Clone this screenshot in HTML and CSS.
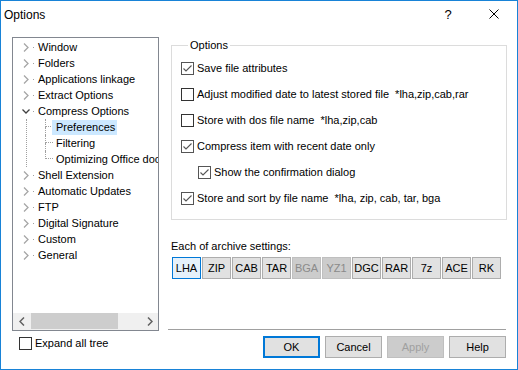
FILE: index.html
```html
<!DOCTYPE html>
<html>
<head>
<meta charset="utf-8">
<link rel="stylesheet" href="styles.css">
</head>
<body>
<div class="window">
  <div class="titlebar">
    <span class="title">Options</span>
    <span class="tb-btn help">?</span>
    <span class="tb-btn close"><svg width="10" height="10" viewBox="0 0 10 10"><path d="M0.5 0.5 L9.5 9.5 M9.5 0.5 L0.5 9.5" stroke="#000" stroke-width="1" fill="none"/></svg></span>
  </div>
  <div class="body">
    <div class="left">
      <div class="tree">
        <div class="tree-items">
          <div class="node"><svg class="chev" width="8" height="9" viewBox="0 0 8 9"><path d="M2 0.5 L6 4.5 L2 8.5" stroke="#a6a6a6" stroke-width="1.3" fill="none"/></svg><i class="stub"></i><span class="label">Window</span></div>
          <div class="node"><svg class="chev" width="8" height="9" viewBox="0 0 8 9"><path d="M2 0.5 L6 4.5 L2 8.5" stroke="#a6a6a6" stroke-width="1.3" fill="none"/></svg><i class="stub"></i><span class="label">Folders</span></div>
          <div class="node"><svg class="chev" width="8" height="9" viewBox="0 0 8 9"><path d="M2 0.5 L6 4.5 L2 8.5" stroke="#a6a6a6" stroke-width="1.3" fill="none"/></svg><i class="stub"></i><span class="label">Applications linkage</span></div>
          <div class="node"><svg class="chev" width="8" height="9" viewBox="0 0 8 9"><path d="M2 0.5 L6 4.5 L2 8.5" stroke="#a6a6a6" stroke-width="1.3" fill="none"/></svg><i class="stub"></i><span class="label">Extract Options</span></div>
          <div class="node"><svg class="chev" width="8" height="9" viewBox="0 0 8 9"><path d="M0.5 2.5 L4 6 L7.5 2.5" stroke="#404040" stroke-width="1.3" fill="none"/></svg><i class="stub"></i><span class="label">Compress Options</span></div>
          <div class="children">
            <div class="child"><span class="branch"><i class="up"></i><i class="down"></i></span><span class="label selected">Preferences</span></div>
            <div class="child"><span class="branch"><i class="up"></i><i class="down"></i></span><span class="label">Filtering</span></div>
            <div class="child"><span class="branch"><i class="up"></i></span><span class="label">Optimizing Office doc</span></div>
          </div>
          <div class="node"><svg class="chev" width="8" height="9" viewBox="0 0 8 9"><path d="M2 0.5 L6 4.5 L2 8.5" stroke="#a6a6a6" stroke-width="1.3" fill="none"/></svg><i class="stub"></i><span class="label">Shell Extension</span></div>
          <div class="node"><svg class="chev" width="8" height="9" viewBox="0 0 8 9"><path d="M2 0.5 L6 4.5 L2 8.5" stroke="#a6a6a6" stroke-width="1.3" fill="none"/></svg><i class="stub"></i><span class="label">Automatic Updates</span></div>
          <div class="node"><svg class="chev" width="8" height="9" viewBox="0 0 8 9"><path d="M2 0.5 L6 4.5 L2 8.5" stroke="#a6a6a6" stroke-width="1.3" fill="none"/></svg><i class="stub"></i><span class="label">FTP</span></div>
          <div class="node"><svg class="chev" width="8" height="9" viewBox="0 0 8 9"><path d="M2 0.5 L6 4.5 L2 8.5" stroke="#a6a6a6" stroke-width="1.3" fill="none"/></svg><i class="stub"></i><span class="label">Digital Signature</span></div>
          <div class="node"><svg class="chev" width="8" height="9" viewBox="0 0 8 9"><path d="M2 0.5 L6 4.5 L2 8.5" stroke="#a6a6a6" stroke-width="1.3" fill="none"/></svg><i class="stub"></i><span class="label">Custom</span></div>
          <div class="node"><svg class="chev" width="8" height="9" viewBox="0 0 8 9"><path d="M2 0.5 L6 4.5 L2 8.5" stroke="#a6a6a6" stroke-width="1.3" fill="none"/></svg><i class="stub"></i><span class="label">General</span></div>
        </div>
        <div class="hscroll">
          <span class="sb-arrow"><svg width="6" height="9" viewBox="0 0 6 9"><path d="M5 0.5 L1 4.5 L5 8.5" stroke="#606060" stroke-width="1.5" fill="none"/></svg></span>
          <span class="sb-track"><span class="sb-thumb"></span></span>
          <span class="sb-arrow"><svg width="6" height="9" viewBox="0 0 6 9"><path d="M1 0.5 L5 4.5 L1 8.5" stroke="#606060" stroke-width="1.5" fill="none"/></svg></span>
        </div>
      </div>
      <div class="check expand"><span class="box"></span><span>Expand all tree</span></div>
    </div>
    <div class="right">
      <fieldset class="group">
        <legend>Options</legend>
        <div class="check row"><span class="box on"><svg width="11" height="11" viewBox="0 0 11 11"><path d="M1.5 5.5 L4 8 L9.5 2.5" stroke="#555" stroke-width="1.1" fill="none"/></svg></span><span>Save file attributes</span></div>
        <div class="check row"><span class="box"></span><span>Adjust modified date to latest stored file &nbsp;*lha,zip,cab,rar</span></div>
        <div class="check row"><span class="box"></span><span>Store with dos file name &nbsp;*lha,zip,cab</span></div>
        <div class="check row"><span class="box on"><svg width="11" height="11" viewBox="0 0 11 11"><path d="M1.5 5.5 L4 8 L9.5 2.5" stroke="#555" stroke-width="1.1" fill="none"/></svg></span><span>Compress item with recent date only</span></div>
        <div class="check row indent"><span class="box on"><svg width="11" height="11" viewBox="0 0 11 11"><path d="M1.5 5.5 L4 8 L9.5 2.5" stroke="#555" stroke-width="1.1" fill="none"/></svg></span><span>Show the confirmation dialog</span></div>
        <div class="check row"><span class="box on"><svg width="11" height="11" viewBox="0 0 11 11"><path d="M1.5 5.5 L4 8 L9.5 2.5" stroke="#555" stroke-width="1.1" fill="none"/></svg></span><span>Store and sort by file name &nbsp;*lha, zip, cab, tar, bga</span></div>
      </fieldset>
      <div class="archive-label">Each of archive settings:</div>
      <div class="archive-buttons">
        <span class="abtn focus">LHA</span>
        <span class="abtn">ZIP</span>
        <span class="abtn">CAB</span>
        <span class="abtn">TAR</span>
        <span class="abtn disabled">BGA</span>
        <span class="abtn disabled">YZ1</span>
        <span class="abtn">DGC</span>
        <span class="abtn">RAR</span>
        <span class="abtn">7z</span>
        <span class="abtn">ACE</span>
        <span class="abtn">RK</span>
      </div>
      <div class="spacer"></div>
      <div class="sep"></div>
      <div class="buttons">
        <span class="btn default">OK</span>
        <span class="btn">Cancel</span>
        <span class="btn disabled">Apply</span>
        <span class="btn">Help</span>
      </div>
    </div>
  </div>
</div>
</body>
</html>
```
FILE: styles.css
```css
* { box-sizing: border-box; }
html, body { margin: 0; padding: 0; background: #fff; }
body { font-family: "Liberation Sans", Arial, sans-serif; font-size: 11px; color: #000; }

.window {
  width: 518px; height: 370px;
  border: 1px solid #1883d7;
  background: #fff;
  display: flex; flex-direction: column;
}
.titlebar {
  height: 30px; display: flex; align-items: center;
  font-size: 12px;
}
.title { flex: 1; padding-left: 3px; padding-bottom: 3px; }
.tb-btn { width: 46px; height: 30px; display: flex; align-items: center; justify-content: center; padding-bottom: 4px; }
.help { font-size: 13px; }

.body { flex: 1; display: flex; padding: 6px 10px 0 11px; gap: 9px; }

.left { width: 147px; display: flex; flex-direction: column; }
.tree {
  height: 294px; border: 1px solid #828790;
  display: flex; flex-direction: column;
}
.tree-items { flex: 1; padding-top: 1px; }
.node { height: 16px; display: flex; align-items: center; padding-left: 9px; white-space: nowrap; }
.chev { flex: none; }
.stub { width: 1px; height: 1px; background: #a0a0a0; margin: 1px 3px 0 3px; }
.label { padding: 0 1px; line-height: 15px; white-space: nowrap; }
.children { margin-left: 13px; border-left: 1px dotted #a0a0a0; height: 48px; padding-left: 18px; }
.child { height: 16px; display: flex; align-items: stretch; white-space: nowrap; overflow: hidden; }
.branch { width: 8px; display: flex; flex-direction: column; flex: none; }
.branch .up { height: 8px; border-left: 1px dotted #a0a0a0; border-bottom: 1px dotted #a0a0a0; }
.branch .down { flex: 1; border-left: 1px dotted #a0a0a0; }
.child .label { padding: 0 2px 0 4px; margin-left: -1px; display: flex; align-items: center; height: 15px; margin-top: 1px; }
.child .label.selected { background: #cce8ff; }

.hscroll { height: 17px; background: #f0f0f0; display: flex; align-items: stretch; }
.sb-arrow { width: 17px; display: flex; align-items: center; justify-content: center; }
.sb-track { flex: 1; display: flex; align-items: stretch; padding: 0 0 1px 1px; }
.sb-thumb { width: 87px; background: #cdcdcd; }

.check { display: flex; align-items: center; white-space: nowrap; }
.box {
  width: 13px; height: 13px; border: 1px solid #333; background: #fff;
  display: flex; align-items: center; justify-content: center; flex: none;
  margin-right: 3px;
}
.box.on { border-color: #555; }
.expand { margin-top: 5px; padding-left: 7px; height: 14px; }

.right { flex: 1; display: flex; flex-direction: column; }
.group {
  margin: 1px 0 0 3px; padding: 3px 0 8px 9px;
  border: 1px solid #dcdcdc; min-width: 0;
}
.group legend { padding: 0 2px; margin-left: 7px; line-height: 14px; }
.row { height: 26px; }
.indent { padding-left: 17px; }

.archive-label { margin-top: 19px; padding-left: 3px; line-height: 14px; }
.archive-buttons { display: flex; gap: 1px; margin-top: 4px; padding-left: 4px; }
.abtn {
  width: 29px; height: 22px; border: 1px solid #adadad; background: #e1e1e1;
  display: flex; align-items: center; justify-content: center;
}
.abtn.focus { border-color: #0078d7; background: #e5f1fb; }
.abtn.disabled { border-color: #bfbfbf; background: #cccccc; color: #8a8a8a; }

.spacer { flex: 1; }
.sep { height: 1px; background: #a0a0a0; margin-right: 1px; }
.buttons { display: flex; justify-content: flex-end; gap: 5px; margin: 6px 1px 11px 0; }
.btn {
  width: 57px; height: 22px; border: 1px solid #adadad; background: #e1e1e1;
  display: flex; align-items: center; justify-content: center;
}
.btn.default { border: 2px solid #0078d7; }
.btn.disabled { border-color: #bfbfbf; background: #cccccc; color: #a0a0a0; }
```
